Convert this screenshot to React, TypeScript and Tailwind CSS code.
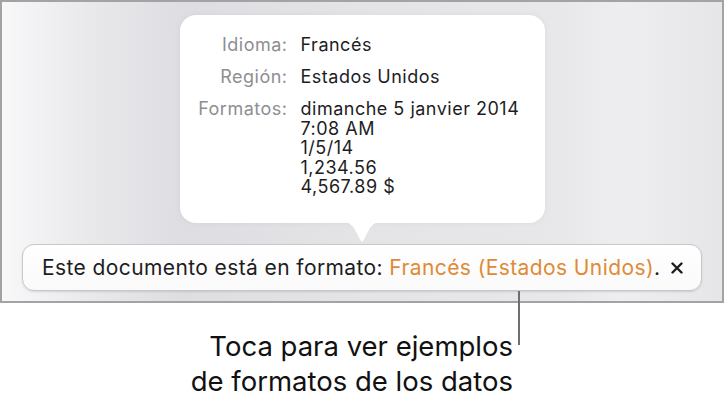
import React from "react";

const rows: { label: string; values: string[] }[] = [
  { label: "Idioma:", values: ["Francés"] },
  { label: "Región:", values: ["Estados Unidos"] },
  {
    label: "Formatos:",
    values: ["dimanche 5 janvier 2014", "7:08 AM", "1/5/14", "1,234.56", "4,567.89 $"],
  },
];

function Arrow() {
  return (
    <svg width="40" height="21" viewBox="0 0 40 21" className="-mt-px block">
      <path
        d="M0 0 C6 0 9 2 12 6 L18.6 18.6 Q20 20.8 21.4 18.6 L28 6 C31 2 34 0 40 0 Z"
        fill="#ffffff"
      />
    </svg>
  );
}

export default function App() {
  return (
    <div className="relative w-[724px] h-[402px] bg-white font-['Inter',sans-serif] overflow-hidden">
      {/* device frame */}
      <div className="h-[303px] border-2 border-[#a3a3a6] bg-[linear-gradient(90deg,#f8f8f9_0%,#e9e9ec_12%,#dedee2_25%,#e4e4e7_50%,#e8e8ea_78%,#eeeef0_86%,#e6e6e9_100%)] flex flex-col items-center pt-[13px]">
        {/* popover */}
        <div className="w-[365px] h-[208px] bg-white rounded-[16px] shadow-[0_0_6px_rgba(0,0,0,0.05)] pl-[16px] pt-[20px]">
          <div className="grid grid-cols-[92px_1fr] gap-x-[13px] gap-y-[12.5px] text-[18px] leading-[19.5px] tracking-[0.5px]">
            {rows.map((r) => (
              <React.Fragment key={r.label}>
                <div className="text-right text-[#8e8e93]">{r.label}</div>
                <div className="text-[#1d1d1f]">
                  {r.values.map((v) => (
                    <div key={v}>{v}</div>
                  ))}
                </div>
              </React.Fragment>
            ))}
          </div>
        </div>
        <Arrow />
        {/* format banner */}
        <div className="mt-px w-[680px] h-[47px] rounded-[12px] border border-[#c7c7cc] bg-[linear-gradient(180deg,#ffffff,#fafafa)] shadow-[0_1px_2px_rgba(0,0,0,0.12)] flex items-center justify-between pl-[19px] pr-[18px]">
          <span className="text-[21px] tracking-[0.4px] text-[#1d1d1f]">
            Este documento está en formato:{" "}
            <span className="text-[#e08a35]">Francés (Estados Unidos)</span>.
          </span>
          <svg width="12" height="12" viewBox="0 0 12 12">
            <path d="M1.5 1.5 L10.5 10.5 M10.5 1.5 L1.5 10.5" stroke="#1d1d1f" strokeWidth="2.4" strokeLinecap="round" />
          </svg>
        </div>
      </div>

      {/* callout line */}
      <div className="absolute left-[518px] top-[291px] w-[1.5px] h-[54px] bg-[#6e6e73]" />

      {/* callout text */}
      <div className="w-[513px] mt-[26px] text-right text-[27.5px] leading-[35px] text-[#111111]">
        <div>Toca para ver ejemplos</div>
        <div>de formatos de los datos</div>
      </div>
    </div>
  );
}
